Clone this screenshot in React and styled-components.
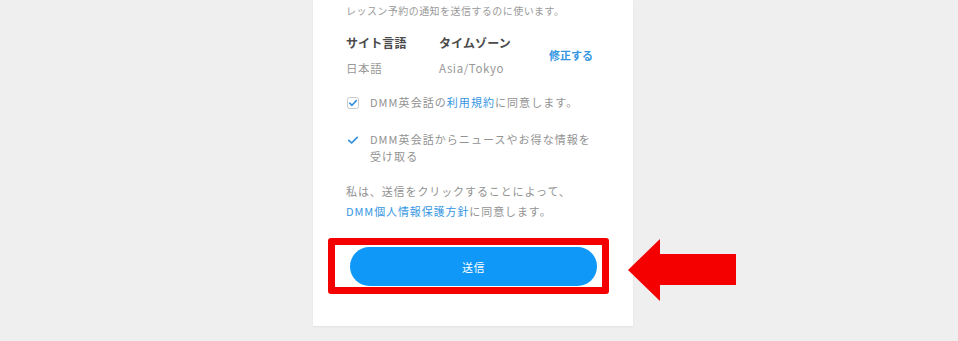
import React from 'react';
import styled, { createGlobalStyle } from 'styled-components';

const GlobalStyle = createGlobalStyle`
  html, body {
    margin: 0;
    padding: 0;
    background: #efefef;
  }
  body {
    font-family: "Noto Sans CJK JP", "Noto Sans", sans-serif;
    -webkit-font-smoothing: antialiased;
  }
`;

function CheckBoxIcon() {
  return (
    <svg width="12" height="12" viewBox="0 0 12 12">
      <rect x="0.5" y="0.5" width="11" height="11" rx="2" fill="#fff" stroke="#c9c9c9" />
      <path d="M2.8 6.2 L5 8.3 L9.3 3.6" fill="none" stroke="#2f8fdc" strokeWidth="1.6" strokeLinecap="round" strokeLinejoin="round" />
    </svg>
  );
}

function CheckMarkIcon() {
  return (
    <svg width="12" height="12" viewBox="0 0 12 12">
      <path d="M1.8 6.4 L4.6 9 L10.2 3.4" fill="none" stroke="#2f8fdc" strokeWidth="1.7" strokeLinecap="round" strokeLinejoin="round" />
    </svg>
  );
}

function ArrowMark() {
  return (
    <svg width="108" height="62" viewBox="0 0 108 62">
      <polygon points="0,31 32,0 32,15 108,15 108,46 32,46 32,62" fill="#f40000" />
    </svg>
  );
}

function App() {
  return (
    <Page>
      <GlobalStyle />
      <Card>
        <Note>レッスン予約の通知を送信するのに使います。</Note>

        <Settings>
          <Heading>サイト言語</Heading>
          <Heading>タイムゾーン</Heading>
          <EditLink>修正する</EditLink>
          <Value>日本語</Value>
          <Value>Asia/Tokyo</Value>
        </Settings>

        <CheckRow top={17}>
          <IconBox><CheckBoxIcon /></IconBox>
          <CheckText>DMM英会話の<Link>利用規約</Link>に同意します。</CheckText>
        </CheckRow>

        <CheckRow top={19}>
          <IconBox><CheckMarkIcon /></IconBox>
          <CheckText>DMM英会話からニュースやお得な情報を<br />受け取る</CheckText>
        </CheckRow>

        <Consent>
          私は、送信をクリックすることによって、<br />
          <Link>DMM個人情報保護方針</Link>に同意します。
        </Consent>

        <SubmitArea>
          <Highlight>
            <SubmitButton type="button">送信</SubmitButton>
          </Highlight>
          <Pointer><ArrowMark /></Pointer>
        </SubmitArea>
      </Card>
    </Page>
  );
}

const Page = styled.div`
  min-height: 341px;
  padding-left: 313px;
  box-sizing: border-box;
`;

const Card = styled.div`
  width: 320px;
  box-sizing: border-box;
  background: #fff;
  padding: 3px 20px 32px 33px;
  box-shadow: 0 1px 2px rgba(0, 0, 0, 0.06);
`;

const Note = styled.p`
  margin: 0;
  font-size: 10px;
  line-height: 16px;
  letter-spacing: 0.45px;
  color: #9a9a9a;
`;

const Settings = styled.div`
  display: grid;
  grid-template-columns: 93px 110px auto;
  grid-template-rows: 18px 18px;
  row-gap: 7px;
  margin-top: 15px;
`;

const Heading = styled.div`
  font-size: 12px;
  line-height: 18px;
  font-weight: 700;
  color: #4a4a4a;
  letter-spacing: 0.1px;
`;

const Value = styled.div`
  font-size: 11.5px;
  line-height: 18px;
  color: #999;
  letter-spacing: 0.6px;
`;

const EditLink = styled.a`
  grid-column: 3;
  grid-row: 1 / span 2;
  align-self: center;
  padding-bottom: 1px;
  font-size: 11px;
  font-weight: 700;
  color: #3596e2;
  cursor: pointer;
`;

const CheckRow = styled.div`
  display: flex;
  align-items: flex-start;
  gap: 11px;
  margin-top: ${p => p.top}px;
  padding-left: 1px;
`;

const IconBox = styled.span`
  display: flex;
  align-items: center;
  height: 18px;
  flex: none;
`;

const CheckText = styled.p`
  margin: 0;
  font-size: 11px;
  line-height: 17px;
  letter-spacing: 1.05px;
  color: #929292;
`;

const Link = styled.span`
  color: #3596e2;
`;

const Consent = styled.p`
  margin: 16px 0 0;
  font-size: 11px;
  line-height: 20px;
  letter-spacing: 0.9px;
  color: #929292;
`;

const SubmitArea = styled.div`
  position: relative;
  margin-top: 17px;
  margin-left: -18px;
`;

const Highlight = styled.div`
  width: 281px;
  height: 56px;
  box-sizing: border-box;
  border: 7px solid #f40000;
  border-radius: 3px;
  padding: 2px 5px 1px 15px;
  display: flex;
`;

const SubmitButton = styled.button`
  flex: 1;
  height: 39px;
  border: none;
  border-radius: 20px;
  background: #0f98f8;
  color: #fff;
  font-family: inherit;
  font-size: 11px;
  letter-spacing: 0.5px;
  cursor: pointer;
`;

const Pointer = styled.div`
  position: absolute;
  left: 300px;
  top: 1px;
  line-height: 0;
`;

export default App;
